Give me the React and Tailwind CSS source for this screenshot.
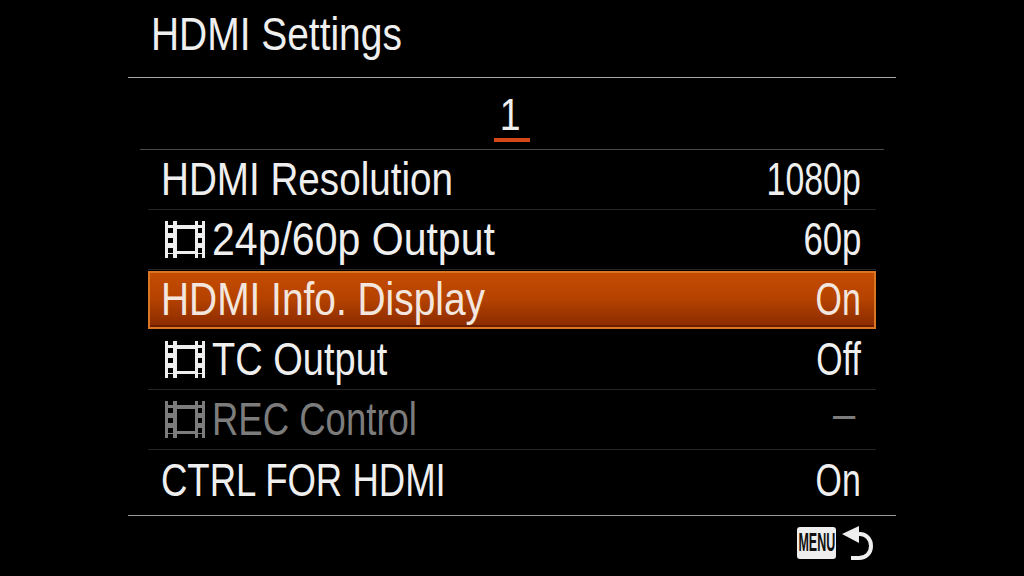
const FONT = "font-['Liberation_Sans',sans-serif]"

const FilmIcon = ({ className }) => (
  <svg viewBox="0 0 40 37" className={className} fill="currentColor">
    <path
      fillRule="evenodd"
      d="M0 0h3v4h5V0h4v4h18V0h3v4h4V0h3v37h-3v-4h-4v4h-3v-4H12v4H8v-4H3v4H0V0zM3 7v5h5V7H3zm0 10v5h5v-5H3zm0 10v5h5v-5H3zM33 7v5h4V7h-4zm0 10v5h4v-5h-4zm0 10v5h4v-5h-4zM12 8v22h18V8H12z"
    />
  </svg>
)

const Value = ({ children, fit = 'scale-x-[0.72]' }) => (
  <span className={`inline-block origin-right whitespace-nowrap ${fit}`}>{children}</span>
)

const Row = ({ label, value, film, dim, active, last, fit, valueFit }) => {
  const tone = dim ? 'text-[#7c7c7c]' : 'text-[#efefef]'
  const text = <span className={`inline-block origin-left whitespace-nowrap ${fit}`}>{label}</span>

  if (active) {
    return (
      <div className="h-[60px] py-px">
        <div className="h-[58px] border-2 border-[#d9761f]">
          <div className="flex h-full items-center justify-between border-b-2 border-[#6e1c00] bg-gradient-to-b from-[#c44c02] via-[#b54200] to-[#8c2c00] pl-[11px] pr-[13px] text-[47px] text-[#f3e6de]">
            {text}
            <Value>{value}</Value>
          </div>
        </div>
      </div>
    )
  }

  return (
    <div className={`flex h-[60px] items-center justify-between pl-[13px] pr-[15px] text-[47px] ${tone} ${last ? '' : 'border-b border-[#262626]'}`}>
      <div className="flex items-center">
        {film && <FilmIcon className="mr-[7px] ml-[4px] h-[37px] w-[40px] shrink-0" />}
        {text}
      </div>
      <Value fit={valueFit}>{value}</Value>
    </div>
  )
}

const rows = [
  { label: 'HDMI Resolution', value: '1080p', fit: 'scale-x-[0.822]' },
  { label: '24p/60p Output', value: '60p', film: true, fit: 'scale-x-[0.873]', valueFit: 'scale-x-[0.74]' },
  { label: 'HDMI Info. Display', value: 'On', active: true, fit: 'scale-x-[0.827]' },
  { label: 'TC Output', value: 'Off', film: true, fit: 'scale-x-[0.809]' },
  { label: 'REC Control', value: '–', film: true, dim: true, fit: 'scale-x-[0.777]', valueFit: 'mr-[6px] -translate-y-[6px] scale-x-[0.85]' },
  { label: 'CTRL FOR HDMI', value: 'On', last: true, fit: 'scale-x-[0.777]' },
]

export default function App() {
  return (
    <div className={`h-[576px] w-[1024px] overflow-hidden bg-black px-[128px] ${FONT}`}>
      {/* title */}
      <div className="flex h-[78px] items-start border-b border-[#a8a8a8] pl-[23px] pt-[9px] text-[47px] leading-[50px] text-[#efefef]">
        <span className="inline-block origin-left scale-x-[0.828] whitespace-nowrap">HDMI Settings</span>
      </div>

      {/* page tab */}
      <div className="mx-3 flex h-[72px] flex-col items-center border-b border-[#4a4a4a]">
        <div className="mt-[14px] flex w-9 flex-col items-center">
          <span className="-translate-x-[2px] scale-x-[0.85] text-[44px] leading-[46px] text-[#efefef]">1</span>
          <div className="h-1 w-9 bg-[#d4491a]" />
        </div>
      </div>

      {/* settings */}
      <div className="mx-5">
        {rows.map((row) => (
          <Row key={row.label} {...row} />
        ))}
      </div>

      {/* footer */}
      <div className="mt-[5px] flex h-[61px] items-start justify-end border-t border-[#9a9a9a] pr-[23px] pt-[10px]">
        <div className="mt-px flex h-8 w-[39px] items-center justify-center rounded-[3px] bg-[#eeeeee] text-[25px] text-[#111111]">
          <span className="inline-block scale-x-[0.5] font-bold">MENU</span>
        </div>
        <svg viewBox="0 0 31 36" className="ml-[6px] h-9 w-[31px] text-[#eeeeee]" fill="none">
          <path d="M0 8 17 0v17L0 8z" fill="currentColor" />
          <path d="M15 8h3c6 0 11 5 11 12s-5 12-12 12H9" stroke="currentColor" strokeWidth="4" />
        </svg>
      </div>
    </div>
  )
}
